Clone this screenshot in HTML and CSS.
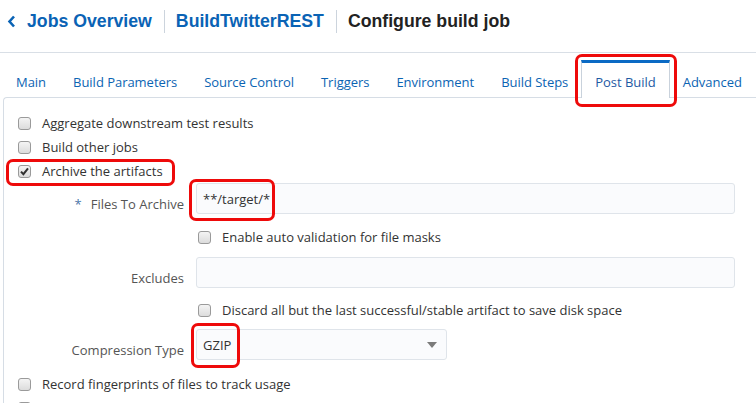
FILE: index.html
```html
<!DOCTYPE html>
<html>
<head>
<meta charset="utf-8">
<link rel="stylesheet" href="styles.css">
</head>
<body>
<div class="page">
  <header class="header">
    <a class="crumb back"><svg class="chev" width="9" height="13" viewBox="0 0 9 13"><path d="M7 1.5 L2.5 6.5 L7 11.5" fill="none" stroke="#0a63b5" stroke-width="2.6"/></svg>Jobs Overview</a>
    <span class="sep"></span>
    <a class="crumb">BuildTwitterREST</a>
    <span class="sep"></span>
    <span class="title">Configure build job</span>
  </header>

  <nav class="tabs">
    <span class="tab">Main</span>
    <span class="tab">Build Parameters</span>
    <span class="tab">Source Control</span>
    <span class="tab">Triggers</span>
    <span class="tab">Environment</span>
    <span class="tab">Build Steps</span>
    <span class="tab active">Post Build</span>
    <span class="tab">Advanced</span>
  </nav>

  <section class="panel">
    <label class="check-row"><span class="cb"></span>Aggregate downstream test results</label>
    <label class="check-row"><span class="cb"></span>Build other jobs</label>
    <label class="check-row"><span class="cb checked"><svg width="11" height="11" viewBox="0 0 11 11"><path d="M2 5.6 L4.4 8.2 L9 2.4" fill="none" stroke="#333" stroke-width="2"/></svg></span>Archive the artifacts</label>

    <div class="field f1">
      <span class="flabel"><span class="req">*</span>Files To Archive</span>
      <span class="input">**/target/*</span>
    </div>
    <label class="check-row sub s1"><span class="cb"></span>Enable auto validation for file masks</label>

    <div class="field f2">
      <span class="flabel">Excludes</span>
      <span class="input"></span>
    </div>
    <label class="check-row sub s2"><span class="cb"></span>Discard all but the last successful/stable artifact to save disk space</label>

    <div class="field f3">
      <span class="flabel">Compression Type</span>
      <span class="select">GZIP<span class="arrow"></span></span>
    </div>
    <label class="check-row r1"><span class="cb"></span>Record fingerprints of files to track usage</label>
    <label class="check-row"><span class="cb"></span>&nbsp;</label>
  </section>

  <span class="mark m1"></span>
  <span class="mark m2"></span>
  <span class="mark m3"></span>
  <span class="mark m4"></span>
</div>
</body>
</html>
```

FILE: styles.css
```css
html, body {
  margin: 0;
  padding: 0;
  background: #fff;
  overflow: hidden;
}
.page {
  position: relative;
  width: 756px;
  height: 403px;
  overflow: hidden;
  font-family: "Open Sans", "Noto Sans", sans-serif;
  font-size: 13px;
  color: #333;
}
.header {
  display: flex;
  align-items: center;
  height: 42px;
  padding: 0 0 10px 7px;
  border-bottom: 1px solid #d9dfe6;
  font-family: "Liberation Sans", Arial, sans-serif;
  font-weight: bold;
  font-size: 17.7px;
}
.crumb {
  color: #0a63b5;
  display: flex;
  align-items: center;
}
.chev {
  margin-right: 11px;
}
.sep {
  width: 1px;
  height: 23px;
  background: #ccd4dd;
  margin: 0 11px 0 12px;
}
.title {
  color: #222;
}
.tabs {
  display: flex;
  margin: 7px 0 0 2px;
  position: relative;
  z-index: 1;
}
.tab {
  color: #0b64b3;
  padding: 10px 13px 6px 13px;
  line-height: 18px;
  border-top: 3px solid transparent;
  border-left: 1px solid transparent;
  border-right: 1px solid transparent;
  margin-right: -1px;
  margin-bottom: -1px;
  white-space: nowrap;
  letter-spacing: -0.03px;
}
.tab.active {
  border-top-color: #0a6ac4;
  border-left-color: #c9d2dc;
  border-right-color: #c9d2dc;
  background: #fff;
  color: #1e5aa3;
  padding-bottom: 7px;
}
.panel {
  margin-left: 3px;
  border-left: 1px solid #d6dde5;
  border-top: 1px solid #d6dde5;
  border-top-left-radius: 4px;
  padding: 13px 0 0 14px;
  height: 400px;
}
.check-row {
  display: flex;
  align-items: center;
  height: 24px;
  white-space: nowrap;
  color: #333;
}
.cb {
  width: 11px;
  height: 11px;
  border: 1px solid #9a9a9a;
  border-radius: 3px;
  background: linear-gradient(#f4f4f4, #dcdcdc);
  margin-right: 11px;
  display: inline-flex;
  align-items: center;
  justify-content: center;
  flex: none;
}
.cb svg { display: block; }
.check-row.sub {
  margin-left: 180px;
}
.field {
  display: flex;
  align-items: flex-end;
}
.flabel {
  width: 166px;
  text-align: right;
  color: #555;
  line-height: 20px;
  margin-right: 12px;
  flex: none;
}
.req {
  color: #4a76a8;
  margin-right: 9px;
}
.input, .select {
  box-sizing: border-box;
  height: 31px;
  border: 1px solid #dfe4ea;
  border-radius: 3px;
  background: #fafbfd;
  display: flex;
  align-items: center;
  padding-left: 6px;
  color: #333;
}
.input {
  width: 539px;
}
.select {
  width: 251px;
  position: relative;
}
.arrow {
  position: absolute;
  right: 9px;
  top: 12px;
  width: 0;
  height: 0;
  border-left: 5px solid transparent;
  border-right: 5px solid transparent;
  border-top: 6px solid #7b7b7b;
}
.s1 { margin-top: 11px; }
.f2 { margin-top: 8px; }
.s2 { margin-top: 10px; }
.f3 { margin-top: 7px; }
.r1 { margin-top: 12px; }

.mark {
  position: absolute;
  border: 3px solid #ee0a0a;
  border-radius: 7px;
  box-sizing: border-box;
  pointer-events: none;
}
.m1 { left: 575px; top: 54px; width: 102px; height: 53px; }
.m2 { left: 6px; top: 159px; width: 169px; height: 27px; }
.m3 { left: 189px; top: 179px; width: 86px; height: 42px; }
.m4 { left: 191px; top: 323px; width: 49px; height: 45px; }
```
